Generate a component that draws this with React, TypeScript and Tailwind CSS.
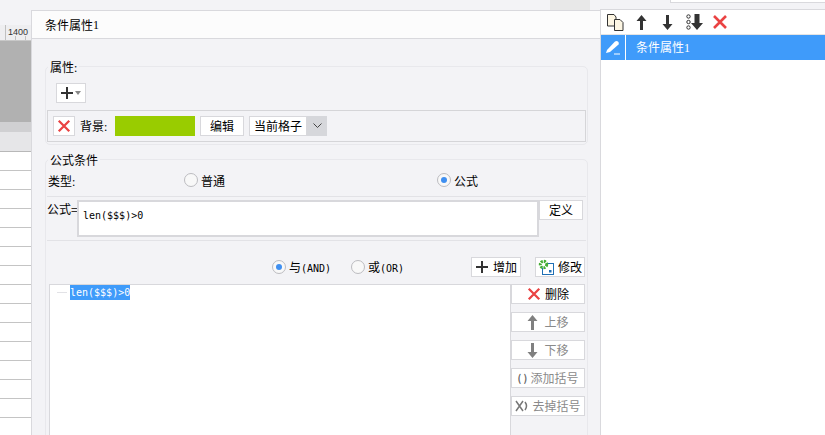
import React from "react";

const mono = "font-['DejaVu_Sans_Mono',monospace] text-[10px]";
const serif = "font-['Liberation_Serif',serif] text-[12px]";

const XIcon: React.FC<{ size?: number }> = ({ size = 16 }) => (
  <svg width={size} height={size} viewBox="0 0 16 16" className="shrink-0">
    <path d="M2 2L14 14M14 2L2 14" stroke="#ea4343" strokeWidth="2.6" fill="none" />
  </svg>
);

const PlusIcon: React.FC = () => (
  <svg width="14" height="14" viewBox="0 0 14 14" className="shrink-0">
    <path d="M7 1V13M1 7H13" stroke="#333" strokeWidth="2" fill="none" />
  </svg>
);

const UpArrow: React.FC<{ color?: string }> = ({ color = "#333" }) => (
  <svg width="11" height="15" viewBox="0 0 11 15" className="shrink-0">
    <path d="M5.5 0L10.5 6H7V15H4V6H0.5Z" fill={color} />
  </svg>
);

const DownArrow: React.FC<{ color?: string }> = ({ color = "#333" }) => (
  <svg width="11" height="15" viewBox="0 0 11 15" className="shrink-0">
    <path d="M5.5 15L10.5 9H7V0H4V9H0.5Z" fill={color} />
  </svg>
);

const Radio: React.FC<{ on?: boolean }> = ({ on }) => (
  <span className="w-[14px] h-[14px] rounded-full border border-[#bcbcc0] bg-[#f8f8f8] flex items-center justify-center shrink-0">
    {on && <span className="w-[6px] h-[6px] rounded-full bg-[#3f8ff0]" />}
  </span>
);

const Btn: React.FC<{ className?: string; disabled?: boolean; children: React.ReactNode }> = ({
  className = "",
  disabled,
  children,
}) => (
  <div
    className={`h-[20px] bg-white border border-[#d8d8dc] flex items-center justify-center shrink-0 ${
      disabled ? "text-[#8a8a8a]" : "text-black"
    } ${className}`}
  >
    {children}
  </div>
);

const Sidebar: React.FC = () => (
  <div className="w-[31px] shrink-0 flex flex-col">
    <div className="h-[16px] shrink-0" />
    <div className="relative h-[16px] shrink-0 bg-[#eeeef0] text-[9px] font-['Liberation_Sans',sans-serif] text-[#333] leading-[14px] pl-[8px] border-b border-[#c8c8c8]">
      1400
      <svg width="31" height="15" viewBox="0 0 31 15" className="absolute left-0 top-0">
        <path d="M5.5 0V15M15.5 11V15M25.5 11V15" stroke="#c0c0c0" fill="none" />
      </svg>
    </div>
    <div className="h-[81px] shrink-0 bg-[#b1b1b1]" />
    <div className="h-[10px] shrink-0 bg-[#d0d0d2]" />
    <div className="h-[20px] shrink-0 bg-[#e6e6e8] border-b border-[#b8b8b8]" />
    {[0, 1, 2, 3, 4, 5, 6, 7, 8, 9, 10, 11, 12, 13, 14].map((i) => (
      <div key={i} className="h-[19px] shrink-0 bg-white border-b border-[#c4c4c4]" />
    ))}
  </div>
);

const AttrGroup: React.FC = () => (
  <div className="relative shrink-0 ml-[13px] mt-[27px] w-[543px] h-[79px] border border-[#e8e8ec] rounded-[5px]">
    <div className="absolute left-[2px] -top-[7px] px-[2px] bg-[#f3f3f6] leading-[14px]">
      属性<span className={serif}>:</span>
    </div>
    <div className="ml-[10px] mt-[16px] w-[30px] h-[20px] bg-white border border-[#d8d8dc] flex items-center pl-[3px] gap-[1px]">
      <PlusIcon />
      <span className="w-0 h-0 border-x-[3px] border-x-transparent border-t-[4px] border-t-[#888]" />
    </div>
    <div className="ml-[1px] mt-[7px] w-[539px] h-[32px] border border-[#d5d5d8] flex items-center pl-[5px]">
      <div className="w-[22px] h-[20px] bg-white border border-[#d8d8dc] flex items-center justify-center">
        <XIcon size={14} />
      </div>
      <span className="ml-[5px] w-[35px]">
        背景<span className={serif}>:</span>
      </span>
      <div className="w-[80px] h-[20px] bg-[#99cc00]" />
      <Btn className="ml-[5px] w-[44px]">编辑</Btn>
      <Btn className="ml-[5px] w-[58px]">当前格子</Btn>
      <div className="w-[20px] h-[20px] bg-[#d6d7db] flex items-center justify-center">
        <svg width="9" height="6" viewBox="0 0 9 6">
          <path d="M0.5 0.5L4.5 4.5L8.5 0.5" stroke="#444" fill="none" />
        </svg>
      </div>
    </div>
  </div>
);

const SideButtons: React.FC = () => (
  <div className="flex flex-col gap-[8px] w-[74px]">
    <Btn className="gap-[4px]">
      <XIcon size={14} />
      删除
    </Btn>
    <Btn disabled className="gap-[6px]">
      <UpArrow color="#808080" />
      上移
    </Btn>
    <Btn disabled className="gap-[6px]">
      <DownArrow color="#808080" />
      下移
    </Btn>
    <Btn disabled className="gap-[3px]">
      <span className="font-bold text-[10px] text-[#666] leading-none">( )</span>
      添加括号
    </Btn>
    <Btn disabled className="gap-[3px]">
      <svg width="14" height="14" viewBox="0 0 14 14" className="shrink-0">
        <path d="M1 2L8 12M8 2L1 12" stroke="#777" strokeWidth="1.5" fill="none" />
        <path d="M10 3Q13 7 10 11" stroke="#777" strokeWidth="1.5" fill="none" />
      </svg>
      去掉括号
    </Btn>
  </div>
);

const FormulaGroup: React.FC = () => (
  <div className="relative shrink-0 ml-[13px] mt-[14px] w-[543px] h-[300px] border border-[#e8e8ec] rounded-t-[5px] pl-px">
    <div className="absolute left-[2px] -top-[8px] px-[2px] bg-[#f3f3f6] leading-[15px]">公式条件</div>
    <div className="w-[539px] h-[37px] pt-[13px] border-b border-[#e2e2e6] flex items-start">
      <span className="ml-[1px] w-[136px] leading-[16px]">
        类型<span className={serif}>:</span>
      </span>
      <Radio />
      <span className="ml-[3px] w-[236px] leading-[16px]">普通</span>
      <Radio on />
      <span className="ml-[3px] leading-[16px]">公式</span>
    </div>
    <div className="w-[539px] h-[44px] pt-[3px] border-b border-[#e2e2e6] flex items-start">
      <span className="w-[30px] leading-[16px] pt-[1px] whitespace-nowrap">公式=</span>
      <div className="w-[462px] h-[37px] bg-white border-2 border-[#d8d8dc] pl-[4px] pt-[5px] leading-[14px]">
        <span className={mono}>len($$$)&gt;0</span>
      </div>
      <Btn className="w-[44px]">定义</Btn>
    </div>
    <div className="w-[539px] h-[43px] flex items-start pt-[16px]">
      <div className="ml-[225px] mt-[3px]">
        <Radio on />
      </div>
      <span className="ml-[3px] w-[62px] leading-[20px]">
        与<span className={mono}>(AND)</span>
      </span>
      <div className="mt-[3px]">
        <Radio />
      </div>
      <span className="ml-[3px] w-[103px] leading-[20px]">
        或<span className={mono}>(OR)</span>
      </span>
      <Btn className="w-[50px] gap-[4px]">
        <PlusIcon />
        增加
      </Btn>
      <Btn className="ml-[14px] w-[50px] gap-[4px]">
        <svg width="16" height="16" viewBox="0 0 16 16" className="shrink-0">
          <rect x="4.5" y="4.5" width="11" height="11" fill="#fff" stroke="#1f6fb5" />
          <circle cx="5.5" cy="5.5" r="3.2" fill="#fff" stroke="#45ad35" strokeWidth="3" strokeDasharray="2 1" />
          <rect x="11" y="11" width="2.5" height="2.5" fill="#1f6fb5" />
        </svg>
        修改
      </Btn>
    </div>
    <div className="flex h-[160px]">
      <div className="ml-[2px] w-[462px] bg-white border border-[#d8d8dc] pl-[7px] flex items-start">
        <div className="flex items-center h-[15px]">
          <span className="w-[10px] h-px bg-[#e2e2e6] mr-[3px]" />
          <span className={`${mono} bg-[#3f9bfa] text-white h-[15px] leading-[15px]`}>len($$$)&gt;0</span>
        </div>
      </div>
      <SideButtons />
    </div>
  </div>
);

const Dialog: React.FC = () => (
  <div className="w-[569px] shrink-0 mt-px border-l border-t border-[#d9d9dd] flex flex-col">
    <div className="h-[28px] bg-[#fcfcfc] border-b border-[#d9d9dd] pl-[13px] flex items-center shrink-0">
      条件属性<span className={serif}>1</span>
    </div>
    <AttrGroup />
    <FormulaGroup />
  </div>
);

const RightPanel: React.FC = () => (
  <div className="flex-1 bg-white border-l border-t border-[#d9d9dd] flex flex-col">
    <div className="h-[24px] flex items-center pl-[6px] shrink-0">
      <svg width="17" height="17" viewBox="0 0 17 17" className="shrink-0">
        <path d="M0.5 0.5H7L9 3V12H0.5Z" fill="#fdf6e3" stroke="#333" />
        <path d="M7.5 5.5H13L16 8.5V16.5H7.5Z" fill="#fdf6e3" stroke="#333" />
      </svg>
      <div className="ml-[12px]">
        <UpArrow />
      </div>
      <div className="ml-[15px]">
        <DownArrow />
      </div>
      <svg width="17" height="16" viewBox="0 0 17 16" className="ml-[13px] shrink-0">
        <circle cx="2.5" cy="2.5" r="1.7" fill="none" stroke="#333" />
        <circle cx="2.5" cy="8" r="1.7" fill="none" stroke="#333" />
        <circle cx="2.5" cy="13.5" r="1.7" fill="none" stroke="#333" />
        <path d="M11 16L17 9H13.5V0H8.5V9H5Z" fill="#333" />
      </svg>
      <div className="ml-[9px]">
        <XIcon size={16} />
      </div>
    </div>
    <div className="h-[26px] bg-[#3f9bfa] border-t border-[#e4e4e4] flex items-center text-white shrink-0">
      <div className="w-[25px] h-full border-r border-white flex items-center justify-center">
        <svg width="16" height="15" viewBox="0 0 16 15">
          <path d="M2 10L10 1.5Q11.5 0.5 13 1.5Q14.5 3 13.5 4.5L5 12L1 13Z" fill="#fff" />
          <path d="M9 14H15" stroke="#fff" />
        </svg>
      </div>
      <span className="ml-[10px]">
        条件属性<span className={serif}>1</span>
      </span>
    </div>
  </div>
);

const App: React.FC = () => (
  <div className="w-[825px] h-[435px] overflow-hidden bg-[#f3f3f6] flex flex-col text-[12px] text-black font-['Noto_Sans_CJK_SC','Liberation_Sans',sans-serif]">
    <div className="h-[9px] shrink-0 flex items-start">
      <div className="ml-[550px] w-[40px] h-[10px] bg-[#e8e8e8]" />
      <div className="ml-[80px] flex-1 h-[3px] bg-white border-b border-l border-[#d9d9dd]" />
    </div>
    <div className="flex flex-1 min-h-0">
      <Sidebar />
      <Dialog />
      <RightPanel />
    </div>
  </div>
);

export default App;
